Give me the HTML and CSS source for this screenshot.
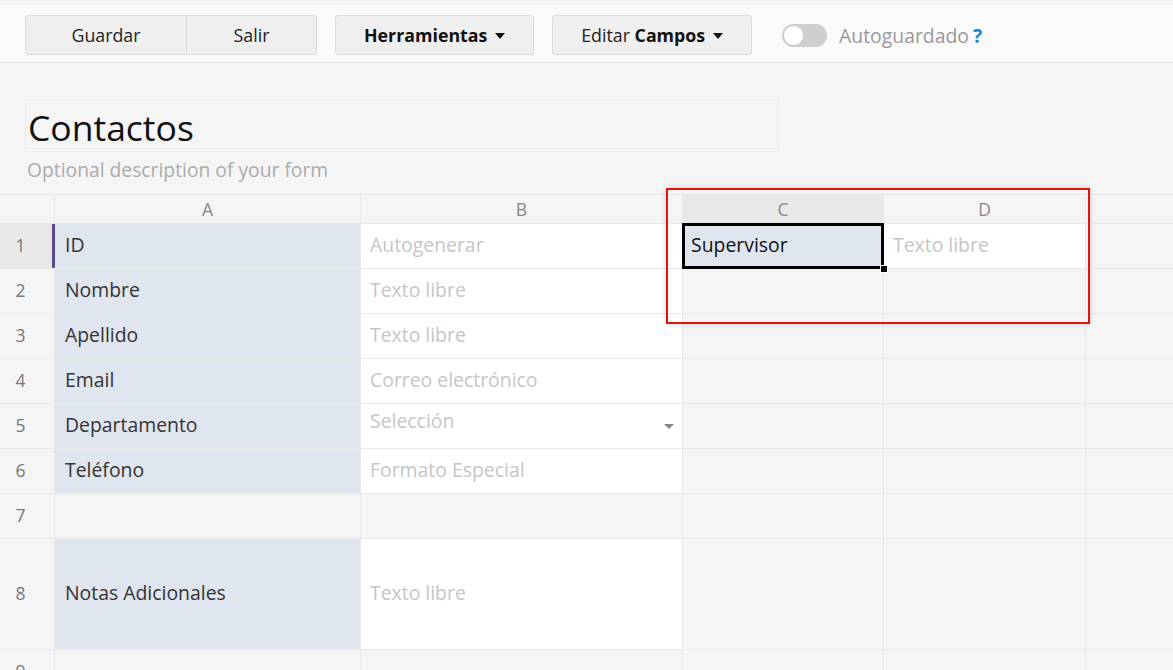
FILE: index.html
```html
<!DOCTYPE html>
<html lang="es">
<head>
  <meta charset="UTF-8" />
  <title>Contactos</title>
  <link rel="stylesheet" href="styles.css">
</head>
<body>
  <div class="toolbar">
    <div class="btn-group">
      <button class="btn btn-save">Guardar</button>
      <button class="btn btn-exit">Salir</button>
    </div>
    <button class="btn btn-tools"><b>Herramientas</b> <span class="caret"></span></button>
    <button class="btn btn-fields">Editar <b>Campos</b> <span class="caret"></span></button>
    <div class="autosave">
      <span class="switch"><span class="knob"></span></span>
      <span class="autosave-label">Autoguardado</span>
      <span class="help">?</span>
    </div>
  </div>

  <div class="form-head">
    <div class="form-title">Contactos</div>
    <div class="form-desc">Optional description of your form</div>
  </div>

  <div class="sheet">
    <div class="grid">
      <div class="hd corner"></div>
      <div class="hd">A</div>
      <div class="hd">B</div>
      <div class="hd hd-active">C</div>
      <div class="hd">D</div>
      <div class="hd"></div>

      <div class="num num-active">1</div>
      <div class="label label-first">ID</div>
      <div class="value">Autogenerar</div>
      <div class="label selected">Supervisor<span class="handle"></span></div>
      <div class="value">Texto libre</div>
      <div class="empty"></div>

      <div class="num">2</div>
      <div class="label">Nombre</div>
      <div class="value">Texto libre</div>
      <div class="empty"></div>
      <div class="empty"></div>
      <div class="empty"></div>

      <div class="num">3</div>
      <div class="label">Apellido</div>
      <div class="value">Texto libre</div>
      <div class="empty"></div>
      <div class="empty"></div>
      <div class="empty"></div>

      <div class="num">4</div>
      <div class="label">Email</div>
      <div class="value">Correo electrónico</div>
      <div class="empty"></div>
      <div class="empty"></div>
      <div class="empty"></div>

      <div class="num">5</div>
      <div class="label">Departamento</div>
      <div class="value value-select">Selección<span class="select-caret"></span></div>
      <div class="empty"></div>
      <div class="empty"></div>
      <div class="empty"></div>

      <div class="num">6</div>
      <div class="label">Teléfono</div>
      <div class="value">Formato Especial</div>
      <div class="empty"></div>
      <div class="empty"></div>
      <div class="empty"></div>

      <div class="num">7</div>
      <div class="empty"></div>
      <div class="empty"></div>
      <div class="empty"></div>
      <div class="empty"></div>
      <div class="empty"></div>

      <div class="num">8</div>
      <div class="label">Notas Adicionales</div>
      <div class="value">Texto libre</div>
      <div class="empty"></div>
      <div class="empty"></div>
      <div class="empty"></div>

      <div class="num">9</div>
      <div class="empty"></div>
      <div class="empty"></div>
      <div class="empty"></div>
      <div class="empty"></div>
      <div class="empty"></div>
    </div>
    <div class="highlight"></div>
  </div>
</body>
</html>
```

FILE: styles.css
```css
* {
  margin: 0;
  padding: 0;
  box-sizing: border-box;
  font-family: 'Open Sans', 'Noto Sans', sans-serif;
}

body {
  background: #f5f5f5;
  color: #222;
  overflow: hidden;
  height: 670px;
}

.toolbar {
  margin-top: 3px;
  height: 60px;
  background: #fafafa;
  border-top: 1px solid #eeeeee;
  border-bottom: 1px solid #e8e8e8;
  display: flex;
  align-items: flex-start;
  padding: 11px 0 0 25px;
  gap: 18px;
}

.btn-group {
  display: flex;
}

.btn {
  height: 40px;
  background: #efefef;
  border: 1px solid #dcdcdc;
  border-radius: 3px;
  font-size: 17.8px;
  color: #222;
  cursor: pointer;
}

.btn b {
  font-weight: 700;
  color: #111;
}

.btn-save {
  width: 162px;
  border-radius: 3px 0 0 3px;
}

.btn-exit {
  width: 130px;
  border-left: none;
  border-radius: 0 3px 3px 0;
}

.btn-tools {
  width: 199px;
}

.btn-fields {
  width: 200px;
}

.caret {
  display: inline-block;
  width: 0;
  height: 0;
  margin-left: 3px;
  vertical-align: 3px;
  border-left: 5px solid transparent;
  border-right: 5px solid transparent;
  border-top: 6px solid #111;
}

.autosave {
  display: flex;
  align-items: center;
  height: 40px;
  margin-left: 12px;
}

.switch {
  width: 45px;
  height: 23px;
  background: #cfcfcf;
  border-radius: 12px;
  padding: 2px;
  display: flex;
}

.knob {
  width: 19px;
  height: 19px;
  background: #fff;
  border-radius: 50%;
}

.autosave-label {
  margin-left: 12px;
  font-size: 19.4px;
  color: #999;
}

.help {
  margin-left: 4px;
  font-size: 19.4px;
  font-weight: 700;
  color: #1b88d1;
}

.form-head {
  padding: 37px 0 0 25px;
  height: 131px;
}

.form-title {
  width: 754px;
  height: 52px;
  border: 1px solid #ececec;
  font-size: 35.5px;
  line-height: 52px;
  padding-left: 2px;
  color: #111;
}

.form-desc {
  width: 754px;
  height: 30px;
  margin-top: 2px;
  font-size: 19.3px;
  line-height: 32px;
  padding-left: 2px;
  color: #ababab;
}

.sheet {
  position: relative;
  border-top: 1px solid #e6e6e6;
}

.grid {
  display: grid;
  grid-template-columns: 54px 305px 321px 200px 201px 1fr;
  grid-template-rows: 28px repeat(7, 44px) 110px 44px;
  gap: 1px;
  background: #e9e9e9;
}

.grid > div {
  font-size: 19.4px;
  display: flex;
  align-items: center;
  padding-bottom: 3px;
}

.hd {
  background: #f5f5f5;
  justify-content: center;
  color: #888;
  font-size: 17.5px !important;
  padding-bottom: 0 !important;
}

.hd-active {
  background: #e8e8e8;
}

.num {
  background: #f5f5f5;
  justify-content: center;
  color: #777;
  font-size: 17.5px !important;
  padding-right: 13px;
}

.num-active {
  background: #e8e8e8;
}

.label {
  background: #e0e6ef;
  color: #333;
  padding-left: 10px;
}

.label-first {
  box-shadow: -3px 0 0 #5c4b8c;
}

.value {
  background: #fff;
  color: #c6c6c6;
  padding-left: 9px;
}

.value-select {
  position: relative;
  align-items: flex-start !important;
  padding-top: 3px;
}

.select-caret {
  position: absolute;
  right: 8px;
  top: 20px;
  border-left: 5px solid transparent;
  border-right: 5px solid transparent;
  border-top: 5px solid #888;
}

.empty {
  background: #f5f5f5;
}

.selected {
  position: relative;
  outline: 3px solid #000;
  outline-offset: -2px;
  padding-left: 8px;
  color: #111;
  z-index: 1;
}

.handle {
  position: absolute;
  right: -5px;
  bottom: -5px;
  width: 8px;
  height: 8px;
  background: #000;
  border: 1px solid #fff;
}

.highlight {
  position: absolute;
  left: 666px;
  top: -7px;
  width: 424px;
  height: 136px;
  border: 2px solid #e51010;
  box-shadow: 0 0 6px rgba(0, 0, 0, 0.15);
  z-index: 2;
  pointer-events: none;
}
```
